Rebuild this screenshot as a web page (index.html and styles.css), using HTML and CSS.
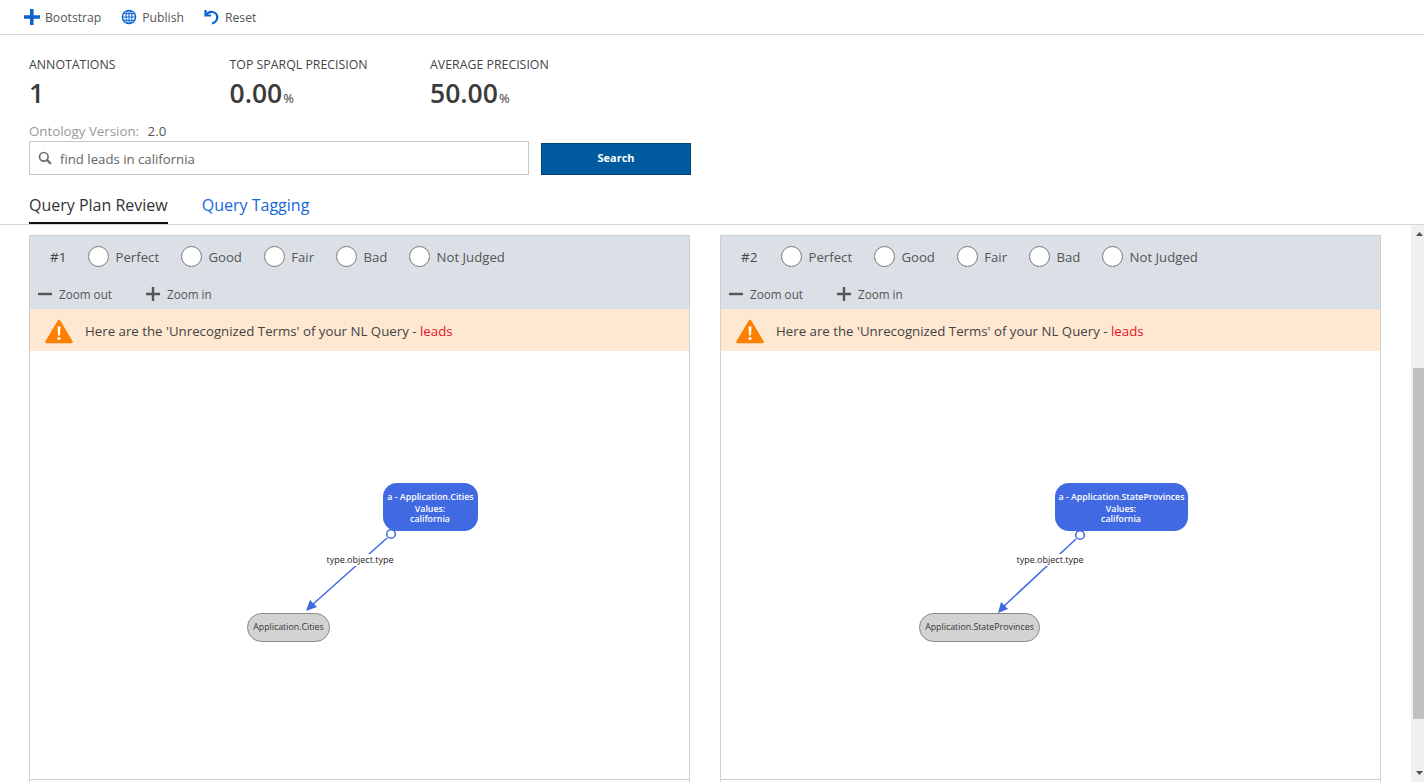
FILE: index.html
```html
<!DOCTYPE html>
<html lang="en">
<head>
    <meta charset="UTF-8">
    <meta name="viewport" content="width=device-width, initial-scale=1.0">
    <title>Query Plan Review</title>
    <link rel="stylesheet" href="styles.css">
</head>
<body>
    <!-- Command bar -->
    <div class="toolbar">
        <button class="tool-btn">
            <svg class="tool-icon" width="18" height="18" viewBox="0 0 18 18"><path d="M7 1h3.600v6.200H17v3.600h-6.400V17H7v-6.200H1V7.200h6z" fill="#0b64d2"/></svg>
            Bootstrap
        </button>
        <button class="tool-btn">
            <svg class="tool-icon" width="16" height="16" viewBox="0 0 16 16" fill="none" stroke="#0b64d2">
                <circle cx="8" cy="8" r="6.600" stroke-width="1.400"/>
                <ellipse cx="8" cy="8" rx="3" ry="6.600"/>
                <path d="M8 1.400v13.200M1.400 8h13.200M2.400 4.700h11.200M2.400 11.300h11.200"/>
            </svg>
            Publish
        </button>
        <button class="tool-btn">
            <svg class="tool-icon" width="16" height="16" viewBox="0 0 16 16" fill="none" stroke="#0b64d2" stroke-width="2.200">
                <path d="M1.500 1v5.500H7"/>
                <path d="M2 6.200C3.500 3.500 6 2.500 8.500 3c3 .6 5 3 4.700 6-.3 2.800-2.400 4.700-5.200 5.500"/>
            </svg>
            Reset
        </button>
    </div>

    <div class="summary">
        <div class="stats">
            <div class="stat">
                <div class="stat-label">ANNOTATIONS</div>
                <div class="stat-value">1</div>
            </div>
            <div class="stat">
                <div class="stat-label">TOP SPARQL PRECISION</div>
                <div class="stat-value">0.00<span class="stat-unit">%</span></div>
            </div>
            <div class="stat">
                <div class="stat-label">AVERAGE PRECISION</div>
                <div class="stat-value">50.00<span class="stat-unit">%</span></div>
            </div>
        </div>
        <div class="version">Ontology Version: <span class="version-num">2.0</span></div>
        <div class="search-row">
            <div class="search-box">
                <svg width="14" height="14" viewBox="0 0 14 14" fill="none" stroke="#6e6e6e" stroke-width="1.700">
                    <circle cx="5.800" cy="5.800" r="4.300"/>
                    <path d="M8.900 8.900l4 4" stroke-width="2.200"/>
                </svg>
                <span class="search-text">find leads in california</span>
            </div>
            <button class="search-btn">Search</button>
        </div>
    </div>

    <div class="tabs">
        <div class="tab tab-active">Query Plan Review</div>
        <div class="tab">Query Tagging</div>
    </div>

    <div class="content">
        <div class="panels">
            <!-- Plan 1 -->
            <div class="panel">
                <div class="panel-head">
                    <div class="rating-row">
                        <span class="plan-num">#1</span>
                        <label class="rating"><span class="radio"></span>Perfect</label>
                        <label class="rating"><span class="radio"></span>Good</label>
                        <label class="rating"><span class="radio"></span>Fair</label>
                        <label class="rating"><span class="radio"></span>Bad</label>
                        <label class="rating"><span class="radio"></span>Not Judged</label>
                    </div>
                    <div class="zoom-row">
                        <span class="zoom-btn"><svg width="14" height="14" viewBox="0 0 14 14"><path d="M0 5.800h14v2.400H0z" fill="#555"/></svg>Zoom out</span>
                        <span class="zoom-btn"><svg width="14" height="14" viewBox="0 0 14 14"><path d="M5.800 0h2.400v5.800H14v2.400H8.200V14H5.800V8.200H0V5.800h5.800z" fill="#555"/></svg>Zoom in</span>
                    </div>
                </div>
                <div class="warning">
                    <svg width="28" height="25" viewBox="0 0 28 25"><path d="M14 2L26.500 23H1.500z" fill="#fd8000" stroke="#fd8000" stroke-width="2.500" stroke-linejoin="round"/><path d="M12.500 7.500h3l-.5 9h-2z" fill="#fff"/><circle cx="14" cy="19.500" r="1.600" fill="#fff"/></svg>
                    <span>Here are the 'Unrecognized Terms' of your NL Query - <span class="term">leads</span></span>
                </div>
                <div class="graph">
                    <svg class="graph-svg" width="659" height="428" viewBox="0 0 659 428">
                        <line class="edge" x1="357" y1="187" x2="281" y2="255"/>
                        <path class="arrow" d="M276 260l4-11 7 7z"/>
                        <circle class="port" cx="361" cy="183" r="4.300"/>
                        <rect class="label-bg" x="292" y="203" width="76" height="12"/>
                        <text class="edge-label" x="330" y="212">type.object.type</text>
                        <rect class="node-main" x="353" y="132" width="95" height="48" rx="14"/>
                        <text class="node-main-text" x="400.500" y="149">a - Application.Cities</text>
                        <text class="node-main-text" x="400" y="161">Values:</text>
                        <text class="node-main-text" x="400" y="171">california</text>
                        <rect class="node-type" x="217.500" y="262.500" width="82" height="28" rx="14"/>
                        <text class="node-type-text" x="258.500" y="279">Application.Cities</text>
                    </svg>
                </div>
            </div>
            <!-- Plan 2 -->
            <div class="panel">
                <div class="panel-head">
                    <div class="rating-row">
                        <span class="plan-num">#2</span>
                        <label class="rating"><span class="radio"></span>Perfect</label>
                        <label class="rating"><span class="radio"></span>Good</label>
                        <label class="rating"><span class="radio"></span>Fair</label>
                        <label class="rating"><span class="radio"></span>Bad</label>
                        <label class="rating"><span class="radio"></span>Not Judged</label>
                    </div>
                    <div class="zoom-row">
                        <span class="zoom-btn"><svg width="14" height="14" viewBox="0 0 14 14"><path d="M0 5.800h14v2.400H0z" fill="#555"/></svg>Zoom out</span>
                        <span class="zoom-btn"><svg width="14" height="14" viewBox="0 0 14 14"><path d="M5.800 0h2.400v5.800H14v2.400H8.200V14H5.800V8.200H0V5.800h5.800z" fill="#555"/></svg>Zoom in</span>
                    </div>
                </div>
                <div class="warning">
                    <svg width="28" height="25" viewBox="0 0 28 25"><path d="M14 2L26.500 23H1.500z" fill="#fd8000" stroke="#fd8000" stroke-width="2.500" stroke-linejoin="round"/><path d="M12.500 7.500h3l-.5 9h-2z" fill="#fff"/><circle cx="14" cy="19.500" r="1.600" fill="#fff"/></svg>
                    <span>Here are the 'Unrecognized Terms' of your NL Query - <span class="term">leads</span></span>
                </div>
                <div class="graph">
                    <svg class="graph-svg" width="659" height="428" viewBox="0 0 659 428">
                        <line class="edge" x1="355" y1="188" x2="282" y2="256"/>
                        <path class="arrow" d="M277 262l3-11 7 7z"/>
                        <circle class="port" cx="359" cy="184" r="4.300"/>
                        <rect class="label-bg" x="291" y="203" width="76" height="12"/>
                        <text class="edge-label" x="329" y="212">type.object.type</text>
                        <rect class="node-main" x="334" y="132" width="133" height="48" rx="14"/>
                        <text class="node-main-text" x="400.500" y="149">a - Application.StateProvinces</text>
                        <text class="node-main-text" x="400" y="161">Values:</text>
                        <text class="node-main-text" x="400" y="171">california</text>
                        <rect class="node-type" x="198.500" y="262.500" width="120" height="28" rx="14"/>
                        <text class="node-type-text" x="258.500" y="279">Application.StateProvinces</text>
                    </svg>
                </div>
            </div>
        </div>
        <div class="scrollbar">
            <svg class="scroll-arrow" width="7" height="4" viewBox="0 0 7 4"><path d="M3.500 0L7 4H0z" fill="#505050"/></svg>
            <div class="scroll-thumb"></div>
            <svg class="scroll-arrow" width="7" height="4" viewBox="0 0 7 4"><path d="M3.500 4L0 0h7z" fill="#505050"/></svg>
        </div>
    </div>
</body>
</html>
```

FILE: styles.css
```css
* {
    box-sizing: border-box;
}
html, body {
    height: 100%;
}
body {
    font-family: 'Open Sans', 'Noto Sans', Arial, sans-serif;
    margin: 0;
    background-color: #fff;
    color: #444;
    overflow: hidden;
    display: flex;
    flex-direction: column;
}
.toolbar {
    height: 35px;
    flex: none;
    display: flex;
    align-items: center;
    gap: 20px;
    padding: 0 0 0 23px;
    border-bottom: 1px solid #d6d6d6;
}
.tool-btn {
    display: flex;
    align-items: center;
    gap: 4px;
    border: none;
    background: none;
    padding: 0;
    font: inherit;
    font-size: 12.200px;
    color: #555;
}
.tool-btn + .tool-btn {
    gap: 5px;
}
.summary {
    flex: none;
    padding: 22px 0 0 29px;
}
.stats {
    display: flex;
}
.stat {
    width: 200.500px;
}
.stat-label {
    font-size: 12.350px;
    line-height: 15px;
    color: #444;
}
.stat-value {
    font-size: 26.500px;
    font-weight: 600;
    line-height: 42px;
    color: #3b3b3b;
}
.stat-unit {
    font-size: 13px;
    font-weight: 400;
    margin-left: 1px;
}
.version {
    margin-top: 3px;
    font-size: 13.300px;
    line-height: 19px;
    color: #999;
}
.version-num {
    color: #555;
    margin-left: 5px;
}
.search-row {
    display: flex;
    align-items: flex-end;
    gap: 12px;
}
.search-box {
    width: 500px;
    height: 34px;
    display: flex;
    align-items: center;
    gap: 8px;
    padding: 0 8px;
    border: 1px solid #c8c8c8;
    font-size: 13.200px;
    color: #666;
}
.search-text {
    padding-top: 2px;
}
.search-btn {
    width: 150px;
    height: 32px;
    padding: 0 0 3px;
    background-color: #005a9e;
    border: 1px solid #004578;
    color: #fff;
    font: inherit;
    font-size: 11px;
    font-weight: 700;
}
.tabs {
    flex: none;
    display: flex;
    gap: 34px;
    height: 50px;
    padding: 17px 0 0 29px;
    border-bottom: 1px solid #d6d6d6;
}
.tab {
    height: 32px;
    font-size: 16px;
    line-height: 26px;
    color: #1468dc;
}
.tab-active {
    color: #333;
    border-bottom: 2px solid #111;
}
.content {
    flex: 1;
    min-height: 0;
    display: flex;
    justify-content: space-between;
}
.panels {
    display: flex;
    gap: 30px;
    padding: 10px 0 0 29px;
}
.panel {
    width: 661px;
    height: 547px;
    border: 1px solid #d0d0d0;
    border-bottom: none;
}
.panel-head {
    background-color: #dbe0e7;
    height: 73px;
}
.rating-row {
    height: 41px;
    display: flex;
    align-items: center;
    padding-left: 20px;
    font-size: 13.200px;
    color: #555;
}
.plan-num {
    width: 38px;
    color: #444;
    font-size: 13.500px;
}
.panel + .panel .plan-num {
    width: 40px;
}
.rating {
    display: flex;
    align-items: center;
    gap: 6.500px;
    margin-right: 21.800px;
}
.radio {
    width: 21px;
    height: 21px;
    border-radius: 50%;
    background: #fff;
    border: 1px solid #777;
}
.zoom-row {
    height: 32px;
    display: flex;
    align-items: center;
    padding: 2px 0 0 8px;
    gap: 34px;
    font-size: 11.700px;
    color: #555;
}
.zoom-btn {
    display: flex;
    align-items: center;
    gap: 7px;
}
.warning {
    height: 42px;
    display: flex;
    align-items: center;
    gap: 12px;
    padding: 2px 0 0 15px;
    background-color: #fee8d2;
    font-size: 13.270px;
    color: #444;
}
.term {
    color: #e81123;
}
.graph {
    position: relative;
    height: 429px;
    border-bottom: 1px solid #d0d0d0;
}
.graph-svg {
    position: absolute;
    left: 0;
    top: 0;
}
.edge {
    stroke: #4169e1;
    stroke-width: 1.500;
}
.arrow {
    fill: #4169e1;
}
.port {
    fill: #fff;
    stroke: #4169e1;
    stroke-width: 1.500;
}
.label-bg {
    fill: #fff;
}
.edge-label {
    font-size: 9px;
    fill: #222;
    text-anchor: middle;
}
.node-main {
    fill: #4169e1;
}
.node-main-text {
    font-size: 8.800px;
    fill: #fff;
    font-weight: 600;
    text-anchor: middle;
}
.node-type {
    fill: #d3d3d3;
    stroke: #888;
}
.node-type-text {
    font-size: 8.800px;
    fill: #333;
    text-anchor: middle;
}
.scrollbar {
    width: 13px;
    flex: none;
    background-color: #f0f0f0;
    display: flex;
    flex-direction: column;
    align-items: flex-end;
    padding: 7px 0 7px;
}
.scroll-arrow {
    margin-right: 1px;
    flex: none;
}
.scroll-thumb {
    width: 11px;
    height: 351px;
    margin-top: 132px;
    margin-bottom: auto;
    background-color: #c0c0c0;
}
```
